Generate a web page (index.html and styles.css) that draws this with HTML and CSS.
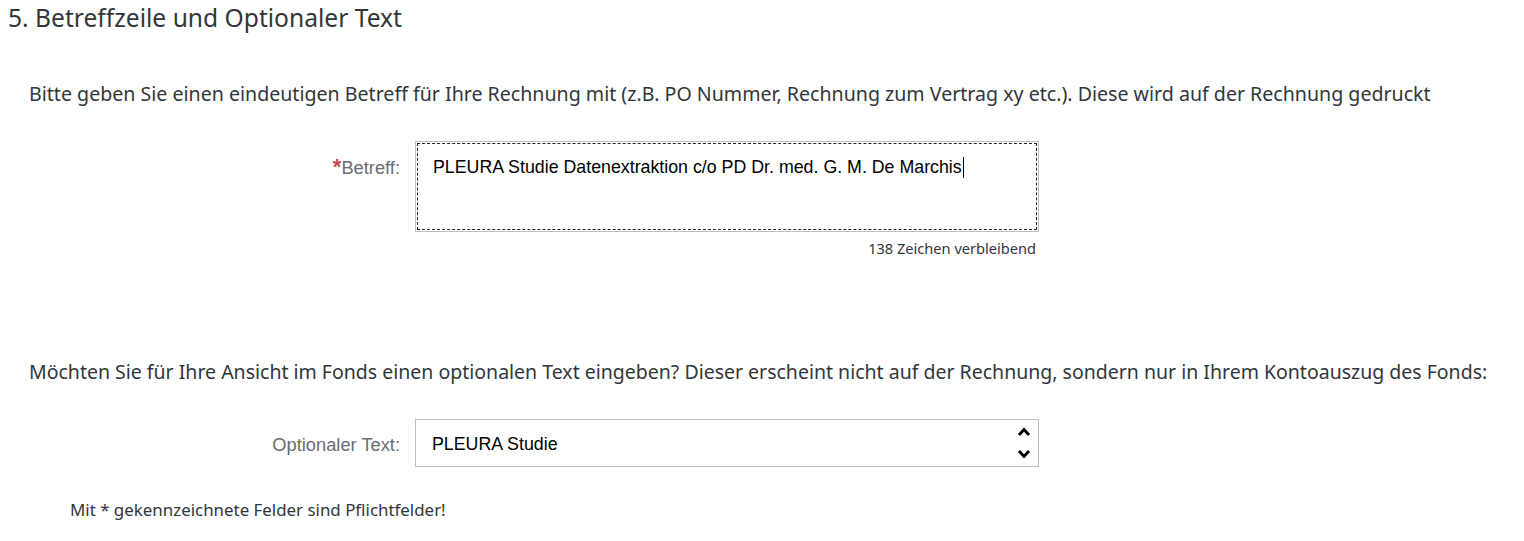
FILE: index.html
```html
<!DOCTYPE html>
<html lang="de">
<head>
<meta charset="utf-8">
<link rel="stylesheet" href="styles.css">
</head>
<body>
<h1 class="title">5. Betreffzeile und Optionaler Text</h1>
<p class="intro">Bitte geben Sie einen eindeutigen Betreff für Ihre Rechnung mit (z.B. PO Nummer, Rechnung zum Vertrag xy etc.). Diese wird auf der Rechnung gedruckt</p>
<div class="row row-top">
  <label class="label"><span class="req">*</span>Betreff:</label>
  <div class="field">
    <div class="textarea"><div class="focus"><span class="value">PLEURA Studie Datenextraktion c/o PD Dr. med. G. M. De Marchis</span><span class="caret"></span></div></div>
    <div class="counter">138 Zeichen verbleibend</div>
  </div>
</div>
<p class="intro intro-2">Möchten Sie für Ihre Ansicht im Fonds einen optionalen Text eingeben? Dieser erscheint nicht auf der Rechnung, sondern nur in Ihrem Kontoauszug des Fonds:</p>
<div class="row row-center">
  <label class="label">Optionaler Text:</label>
  <div class="field">
    <div class="input"><span class="value">PLEURA Studie</span>
      <div class="spin">
        <svg class="chev" viewBox="0 0 14 10"><path d="M2 8 L7 2.5 L12 8" fill="none" stroke="#000" stroke-width="2.8"/></svg>
        <svg class="chev" viewBox="0 0 14 10"><path d="M2 2 L7 7.5 L12 2" fill="none" stroke="#000" stroke-width="2.8"/></svg>
      </div>
    </div>
  </div>
</div>
<p class="note">Mit * gekennzeichnete Felder sind Pflichtfelder!</p>
</body>
</html>
```
FILE: styles.css
```css
body{margin:0;font-family:"Noto Sans","Open Sans",sans-serif;color:#32363a;background:#fff}
.title{margin:0;padding-left:8px;font-size:24.6px;font-weight:400;line-height:36px;white-space:nowrap}
.intro{margin:44px 0 0;padding-left:29px;font-size:19.6px;line-height:28px;white-space:nowrap}
.intro-2{margin-top:100px;font-size:19.5px}
.row{display:flex;gap:15px}
.row-top{margin-top:33px}
.row-center{margin-top:33px;align-items:center}
.label{width:400px;text-align:right;font-family:"Liberation Sans",Arial,sans-serif;font-size:18.3px;color:#6a6d70;line-height:20px}
.row-top .label{padding-top:16px}
.row-center .label{padding-top:3px}
.req{color:#c44a4a;font-weight:700;font-size:22px}
.field{width:624px;display:flex;flex-direction:column}
.textarea{height:91px;border:1px solid #bfbfbf;padding:1px;box-sizing:border-box;display:flex}
.focus{flex:1;border:1px dashed #222;padding:13px 15px 0;font-family:"Liberation Sans",Arial,sans-serif;font-size:17.8px;line-height:20px;color:#000;display:flex;align-items:flex-start}
.caret{display:inline-block;width:1px;height:21px;background:#000;margin-left:1px}
.counter{margin-top:6px;padding-right:3px;text-align:right;font-size:14.6px;line-height:20px}
.input{height:48px;border:1px solid #bfbfbf;box-sizing:border-box;display:flex;align-items:center;padding:3px 7px 0 16px;font-family:"Liberation Sans",Arial,sans-serif;font-size:17.8px;color:#000}
.input .value{flex:1}
.spin{display:flex;flex-direction:column;gap:12px;margin-top:-3px}
.chev{display:block;width:14px;height:10px}
.note{margin:31px 0 0;padding-left:70px;font-size:16.9px;line-height:24px}
```
